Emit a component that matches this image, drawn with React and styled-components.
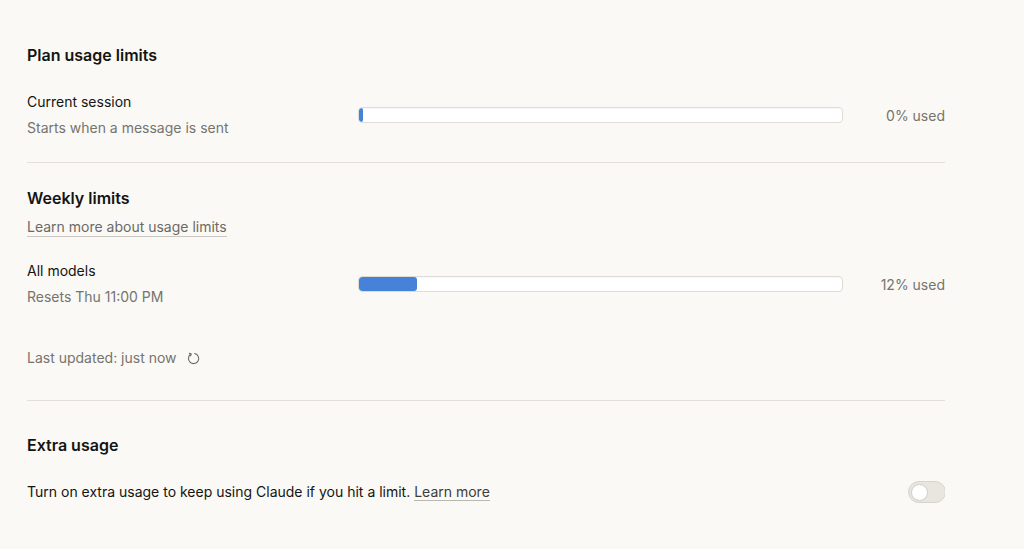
import React from 'react'
import styled, { createGlobalStyle } from 'styled-components'

const GlobalStyle = createGlobalStyle`
  html, body {
    margin: 0;
    padding: 0;
    background: #faf9f5;
  }
  body {
    font-family: 'Inter', 'Liberation Sans', sans-serif;
    color: #141413;
    -webkit-font-smoothing: antialiased;
  }
`

const Page = styled.div`
  width: 945px;
  padding: 36px 0 0 27px;
  height: 549px;
  box-sizing: border-box;
  overflow: hidden;
`

const Section = styled.section`
  display: flex;
  flex-direction: column;
  padding: ${p => p.$pad || '0'};
  border-bottom: ${p => (p.$last ? 'none' : '1px solid #e2e0d8')};
`

const Title = styled.h2`
  margin: 0;
  font-size: 16px;
  font-weight: 600;
  line-height: 22px;
  color: #141413;
`

const LinkText = styled.a`
  align-self: flex-start;
  margin-top: 9px;
  font-size: 14px;
  line-height: 18px;
  color: #6b6a66;
  text-decoration: none;
  border-bottom: 1px solid #c9c7bf;
`

const InlineLink = styled.a`
  color: #3d3d3a;
  text-decoration: none;
  border-bottom: 1px solid #b9b7af;
`

const UsageRow = styled.div`
  display: grid;
  grid-template-columns: 331px 485px 1fr;
  align-items: center;
  margin-top: ${p => p.$top || '0'};
`

const Labels = styled.div`
  display: flex;
  flex-direction: column;
  gap: 8px;
`

const Label = styled.div`
  font-size: 14px;
  line-height: 18px;
  color: #141413;
`

const SubLabel = styled.div`
  font-size: 14px;
  line-height: 18px;
  color: #75746f;
`

const Track = styled.div`
  height: 14px;
  border: 1px solid #dedcd5;
  border-radius: 4px;
  background: #ffffff;
  overflow: hidden;
  display: flex;
  box-shadow: inset 0 1px 1px rgba(0, 0, 0, 0.03);
`

const Fill = styled.div`
  height: 100%;
  min-width: 4px;
  background: #4683d8;
  border-radius: 3px;
`

const Percent = styled.div`
  text-align: right;
  font-size: 14px;
  color: #75746f;
`

const Updated = styled.div`
  display: flex;
  align-items: center;
  gap: 10px;
  margin-top: 43px;
  font-size: 14px;
  line-height: 18px;
  color: #75746f;
`

const ExtraRow = styled.div`
  display: flex;
  align-items: center;
  justify-content: space-between;
  margin-top: 25px;
  font-size: 14px;
  line-height: 18px;
  color: #141413;
`

const Toggle = styled.div`
  width: 32px;
  height: 20px;
  border-radius: 11px;
  background: #e8e6de;
  border: 1px solid #d6d4cc;
  display: flex;
  align-items: center;
  padding: 0 2px;
  box-sizing: content-box;
  margin-right: -1px;
`

const Knob = styled.div`
  width: 15px;
  height: 15px;
  border-radius: 50%;
  background: #ffffff;
  border: 1px solid #cfcdc5;
`

const RefreshIcon = () => (
  <svg width="13" height="13" viewBox="0 0 14 14" fill="none" stroke="#6b6a66" strokeWidth="1.2" strokeLinecap="round" strokeLinejoin="round">
    <path d="M8.3 1.6 A5.5 5.5 0 1 1 4.3 2.2" />
    <path d="M2.6 1.5 L4.4 2.2 L3.9 4.1" />
  </svg>
)

function Usage ({ label, sub, pct, top }) {
  return (
    <UsageRow $top={top}>
      <Labels>
        <Label>{label}</Label>
        <SubLabel>{sub}</SubLabel>
      </Labels>
      <Track>
        <Fill style={{ width: `${pct}%` }} />
      </Track>
      <Percent>{pct}% used</Percent>
    </UsageRow>
  )
}

export default function App () {
  return (
    <>
      <GlobalStyle />
      <Page>
        <Section $pad='8px 0 25px'>
          <Title>Plan usage limits</Title>
          <Usage label='Current session' sub='Starts when a message is sent' pct={0} top='27px' />
        </Section>
        <Section $pad='24px 0 33px'>
          <Title>Weekly limits</Title>
          <LinkText href='#'>Learn more about usage limits</LinkText>
          <Usage label='All models' sub='Resets Thu 11:00 PM' pct={12} top='25px' />
          <Updated>
            Last updated: just now
            <RefreshIcon />
          </Updated>
        </Section>
        <Section $pad='33px 0 0' $last>
          <Title>Extra usage</Title>
          <ExtraRow>
            <span>
              Turn on extra usage to keep using Claude if you hit a limit.{' '}
              <InlineLink href='#'>Learn more</InlineLink>
            </span>
            <Toggle>
              <Knob />
            </Toggle>
          </ExtraRow>
        </Section>
      </Page>
    </>
  )
}
